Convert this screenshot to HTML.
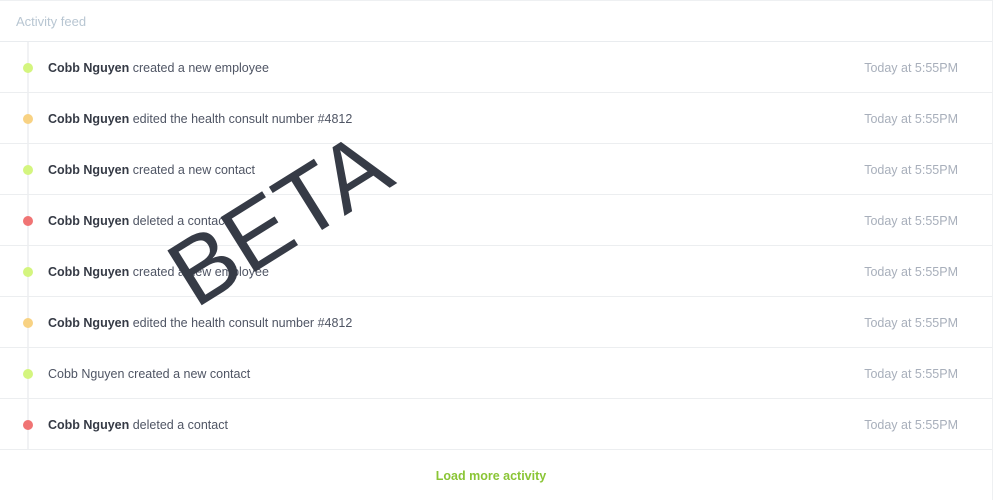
<!DOCTYPE html>
<html><head><style>
*{margin:0;padding:0;box-sizing:border-box}
body{width:993px;height:500px;background:#fff;font-family:"Liberation Sans",sans-serif;position:relative;overflow:hidden}
.wrap{position:absolute;left:0;top:0;width:993px;height:500px;border-top:1px solid #eef0f2;border-right:1px solid #eef0f2}
.hd{height:41px;border-bottom:1px solid #e9ecef;padding-left:16px;line-height:42px;font-size:13px;color:#b8c6d2}
.line{position:absolute;left:27px;top:41px;width:2px;height:408px;background:#f1f2f4}
.row{position:relative;height:51px;border-bottom:1px solid #eceef0;font-size:12.5px;color:#4f5564;line-height:52px;padding-left:48px}
.row b{color:#353a45}
.dot{position:absolute;left:23px;top:21px;width:10px;height:10px;border-radius:50%}
.g{background:#d4f57f}.o{background:#f8d283}.r{background:#f07474}
.t{position:absolute;right:34px;top:0;color:#a8afbb}
.more{text-align:center;line-height:52px;font-size:12.5px;font-weight:bold;color:#8ac535;padding-right:10px}
.beta{position:absolute;left:160px;top:165px;font-size:94px;color:#363b46;transform:rotate(-32deg);transform-origin:center;letter-spacing:0px}
</style></head><body>
<div class="wrap">
<div class="hd">Activity feed</div>
<div class="line"></div>
<div class="row"><span class="dot g"></span><b>Cobb Nguyen</b> created a new employee<span class="t">Today at 5:55PM</span></div>
<div class="row"><span class="dot o"></span><b>Cobb Nguyen</b> edited the health consult number #4812<span class="t">Today at 5:55PM</span></div>
<div class="row"><span class="dot g"></span><b>Cobb Nguyen</b> created a new contact<span class="t">Today at 5:55PM</span></div>
<div class="row"><span class="dot r"></span><b>Cobb Nguyen</b> deleted a contact<span class="t">Today at 5:55PM</span></div>
<div class="row"><span class="dot g"></span><b>Cobb Nguyen</b> created a new employee<span class="t">Today at 5:55PM</span></div>
<div class="row"><span class="dot o"></span><b>Cobb Nguyen</b> edited the health consult number #4812<span class="t">Today at 5:55PM</span></div>
<div class="row"><span class="dot g"></span>Cobb Nguyen created a new contact<span class="t">Today at 5:55PM</span></div>
<div class="row"><span class="dot r"></span><b>Cobb Nguyen</b> deleted a contact<span class="t">Today at 5:55PM</span></div>
<div class="more">Load more activity</div>
</div>
<div class="beta">BETA</div>
</body></html>
